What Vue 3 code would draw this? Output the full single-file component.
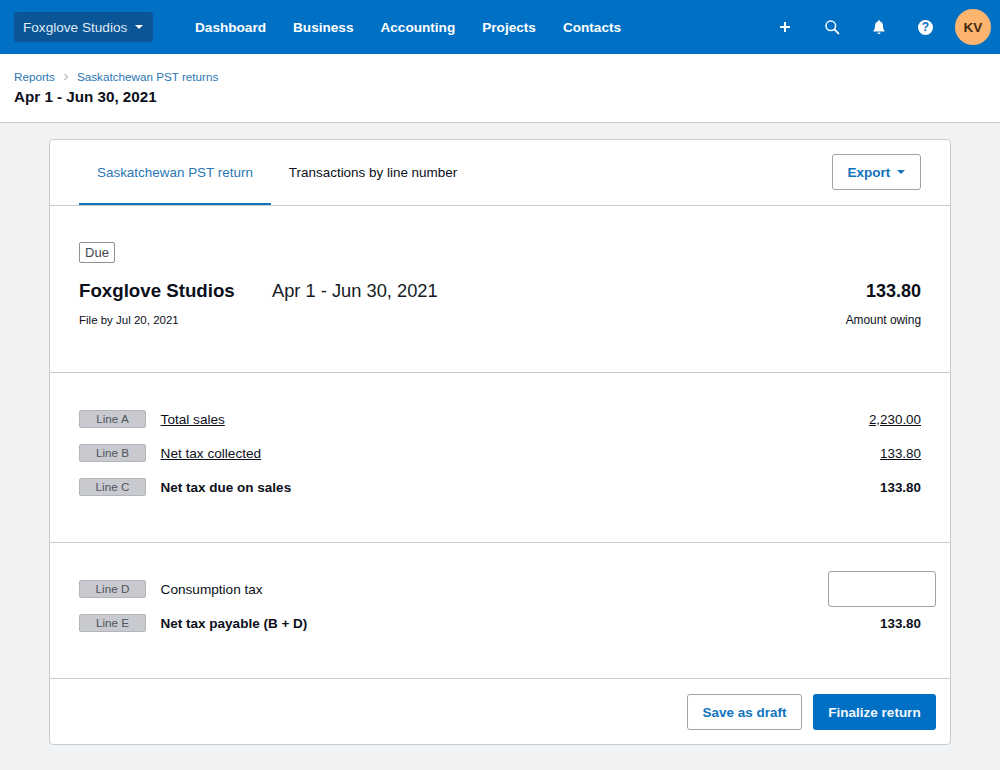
<template>
  <div class="page">
    <header class="topbar">
      <button class="switcher">
        <span>Foxglove Studios</span>
        <span class="caret caret--white"></span>
      </button>
      <nav class="topnav">
        <a v-for="item in navItems" :key="item" class="topnav__link">{{ item }}</a>
      </nav>
      <div class="topbar__actions">
        <svg class="action-icon" viewBox="0 0 16 16" aria-hidden="true">
          <path d="M8 3v10M3 8h10" fill="none" stroke="#fff" stroke-width="2" />
        </svg>
        <svg class="action-icon" viewBox="0 0 16 16" aria-hidden="true">
          <circle cx="6.8" cy="6.8" r="4.8" fill="none" stroke="#fff" stroke-width="1.5" />
          <path d="M10.4 10.4l4 4" fill="none" stroke="#fff" stroke-width="1.9" stroke-linecap="round" />
        </svg>
        <svg class="action-icon" viewBox="0 0 16 16" aria-hidden="true">
          <path d="M8 1.2c.6 0 1 .4 1 1v.4c2 .5 3 2.2 3 4.400 0 2.400.5 3.500 1.500 4.700v.7h-11v-.7c1-1.200 1.500-2.300 1.500-4.700 0-2.200 1-3.900 3-4.400v-.4c0-.6.400-1 1-1z" fill="#fff" />
          <path d="M6.500 13.500h3a1.500 1.500 0 0 1-3 0z" fill="#fff" />
        </svg>
        <span class="help">?</span>
        <span class="avatar">KV</span>
      </div>
    </header>

    <div class="subheader">
      <div class="crumbs">
        <a>Reports</a>
        <svg class="crumbs__sep" viewBox="0 0 6 8" aria-hidden="true">
          <path d="M1.500 1l3 3-3 3" fill="none" stroke="#8a9097" stroke-width="1" />
        </svg>
        <a>Saskatchewan PST returns</a>
      </div>
      <h1 class="subheader__title">Apr 1 - Jun 30, 2021</h1>
    </div>

    <main class="card">
      <div class="tabs">
        <a class="tab tab--active">Saskatchewan PST return</a>
        <a class="tab">Transactions by line number</a>
        <button class="btn btn--outline tabs__export">
          Export
          <span class="caret caret--blue"></span>
        </button>
      </div>

      <section class="summary">
        <span class="due-tag">Due</span>
        <div class="summary__main">
          <strong class="summary__name">Foxglove Studios</strong>
          <span class="summary__period">Apr 1 - Jun 30, 2021</span>
          <strong class="summary__amount">133.80</strong>
        </div>
        <div class="summary__sub">
          <span>File by Jul 20, 2021</span>
          <span class="summary__owing">Amount owing</span>
        </div>
      </section>

      <section class="lines">
        <div v-for="row in salesLines" :key="row.tag" class="line" :class="{ 'line--bold': row.bold }">
          <span class="line__tag">{{ row.tag }}</span>
          <span class="line__label" :class="{ 'line__label--link': row.link }">{{ row.label }}</span>
          <span class="line__value" :class="{ 'line__label--link': row.link }">{{ row.value }}</span>
        </div>
      </section>

      <section class="lines">
        <div class="line">
          <span class="line__tag">Line D</span>
          <span class="line__label">Consumption tax</span>
          <input class="line__input" type="text" aria-label="Consumption tax" />
        </div>
        <div class="line line--bold">
          <span class="line__tag">Line E</span>
          <span class="line__label">Net tax payable (B + D)</span>
          <span class="line__value">133.80</span>
        </div>
      </section>

      <footer class="card__footer">
        <button class="btn btn--outline btn--draft">Save as draft</button>
        <button class="btn btn--primary">Finalize return</button>
      </footer>
    </main>
  </div>
</template>

<script setup>
const navItems = ['Dashboard', 'Business', 'Accounting', 'Projects', 'Contacts']

const salesLines = [
  { tag: 'Line A', label: 'Total sales', value: '2,230.00', link: true },
  { tag: 'Line B', label: 'Net tax collected', value: '133.80', link: true },
  { tag: 'Line C', label: 'Net tax due on sales', value: '133.80', bold: true },
]
</script>

<style>
html,
body {
  margin: 0;
  background: #f1f2f4;
}
</style>

<style scoped>
.page {
  min-height: 770px;
  background: #f1f2f4;
  font-family: "Liberation Sans", Arial, sans-serif;
  color: #0b0f1a;
  padding-bottom: 25px;
  box-sizing: border-box;
}

/* Top bar */
.topbar {
  display: flex;
  align-items: center;
  height: 54px;
  padding: 0 9px 0 14px;
  background: #0070c5;
  box-sizing: border-box;
}

.switcher {
  display: flex;
  align-items: center;
  justify-content: space-between;
  width: 139px;
  height: 30px;
  padding: 0 10px 0 9px;
  border: 0;
  border-radius: 3px;
  background: #0a5596;
  color: #dfeaf5;
  font: 13.6px "Liberation Sans", Arial, sans-serif;
  box-sizing: border-box;
}

.caret {
  display: inline-block;
  width: 0;
  height: 0;
  border-left: 4px solid transparent;
  border-right: 4px solid transparent;
}

.caret--white {
  border-top: 4px solid #fff;
}

.caret--blue {
  border-top: 4px solid #1273bd;
  margin-left: 7px;
}

.topnav {
  display: flex;
  gap: 27px;
  margin-left: 42px;
}

.topnav__link {
  color: #fff;
  font-size: 13.6px;
  font-weight: 700;
}

.topbar__actions {
  display: flex;
  align-items: center;
  margin-left: auto;
}

.action-icon {
  width: 16px;
  height: 16px;
  margin-right: 31px;
}

.help {
  display: flex;
  align-items: center;
  justify-content: center;
  width: 15px;
  height: 15px;
  margin-right: 22px;
  border-radius: 50%;
  background: #fff;
  color: #0070c5;
  font-size: 12px;
  font-weight: 700;
}

.avatar {
  display: flex;
  align-items: center;
  justify-content: center;
  width: 36px;
  height: 36px;
  border-radius: 50%;
  background: #fdb46f;
  color: #3f2a12;
  font-size: 13.5px;
  font-weight: 700;
}

/* Breadcrumb header */
.subheader {
  height: 69px;
  padding: 15px 14px 0;
  background: #fff;
  border-bottom: 1px solid #c9cccf;
  box-sizing: border-box;
}

.crumbs {
  display: flex;
  align-items: center;
  height: 14px;
  color: #2a77b5;
  font-size: 11.7px;
}

.crumbs__sep {
  width: 6px;
  height: 8px;
  margin: 1px 8px 0;
}

.subheader__title {
  margin: 5px 0 0;
  font-size: 15.2px;
  line-height: 18px;
  font-weight: 700;
}

/* Card */
.card {
  width: 902px;
  margin: 16px auto 0;
  background: #fff;
  border: 1px solid #c9cccf;
  border-radius: 4px;
  box-sizing: border-box;
}

.tabs {
  display: flex;
  align-items: stretch;
  height: 66px;
  padding: 0 29px;
  border-bottom: 1px solid #c9cccf;
  box-sizing: border-box;
}

.tab {
  display: flex;
  align-items: center;
  height: 65px;
  padding: 0 18px;
  font-size: 13.45px;
  box-sizing: border-box;
}

.tab--active {
  padding-top: 2px;
  color: #2a77b5;
  border-bottom: 2px solid #1273bd;
}

.btn {
  font-family: "Liberation Sans", Arial, sans-serif;
  font-size: 13.5px;
  font-weight: 700;
  height: 36px;
  border-radius: 3px;
  box-sizing: border-box;
}

.btn--outline {
  background: #fff;
  border: 1px solid #9fa3a8;
  color: #1273bd;
}

.btn--primary {
  width: 123px;
  border: 0;
  background: #0070c5;
  color: #f2f7fb;
}

.btn--draft {
  width: 115px;
}

.tabs__export {
  display: flex;
  align-items: center;
  justify-content: center;
  width: 89px;
  margin: 14px 0 0 auto;
}

.summary {
  height: 167px;
  padding: 36px 29px 0;
  border-bottom: 1px solid #c9cccf;
  box-sizing: border-box;
}

.due-tag {
  display: block;
  width: 36px;
  height: 21px;
  border: 1px solid #8d9196;
  border-radius: 2px;
  font-size: 13px;
  line-height: 19px;
  text-align: center;
  color: #41464d;
  box-sizing: border-box;
}

.summary__main {
  display: flex;
  align-items: center;
  height: 26px;
  margin-top: 15px;
}

.summary__name {
  width: 193px;
  font-size: 18.7px;
}

.summary__period {
  font-size: 18.3px;
  color: #161b26;
}

.summary__amount {
  margin-left: auto;
  font-size: 18px;
}

.summary__sub {
  display: flex;
  justify-content: space-between;
  margin-top: 9px;
  font-size: 11.5px;
  line-height: 14px;
}

.summary__owing {
  font-size: 11.9px;
}

.lines {
  padding: 29px 29px 38px;
  border-bottom: 1px solid #c9cccf;
}

.line {
  display: flex;
  align-items: center;
  height: 34px;
  font-size: 13.6px;
}

.line--bold {
  font-size: 13.5px;
  font-weight: 700;
}

.line__tag {
  width: 67px;
  height: 18px;
  margin-right: 14.6px;
  border: 1px solid #b2b6bc;
  border-radius: 2px;
  background: #c8cad0;
  color: #4f545d;
  font-size: 11.7px;
  font-weight: 400;
  line-height: 16px;
  text-align: center;
  box-sizing: border-box;
}

.line__label--link {
  text-decoration: underline;
}

.line__value {
  margin-left: auto;
  font-size: 13.4px;
}

.line__input {
  width: 108px;
  height: 36px;
  margin: 0 -15px 0 auto;
  border: 1px solid #9fa3a8;
  border-radius: 3px;
  background: #fff;
  box-sizing: border-box;
}

.card__footer {
  display: flex;
  justify-content: flex-end;
  gap: 11px;
  padding: 15px 14px 14px;
}
</style>
